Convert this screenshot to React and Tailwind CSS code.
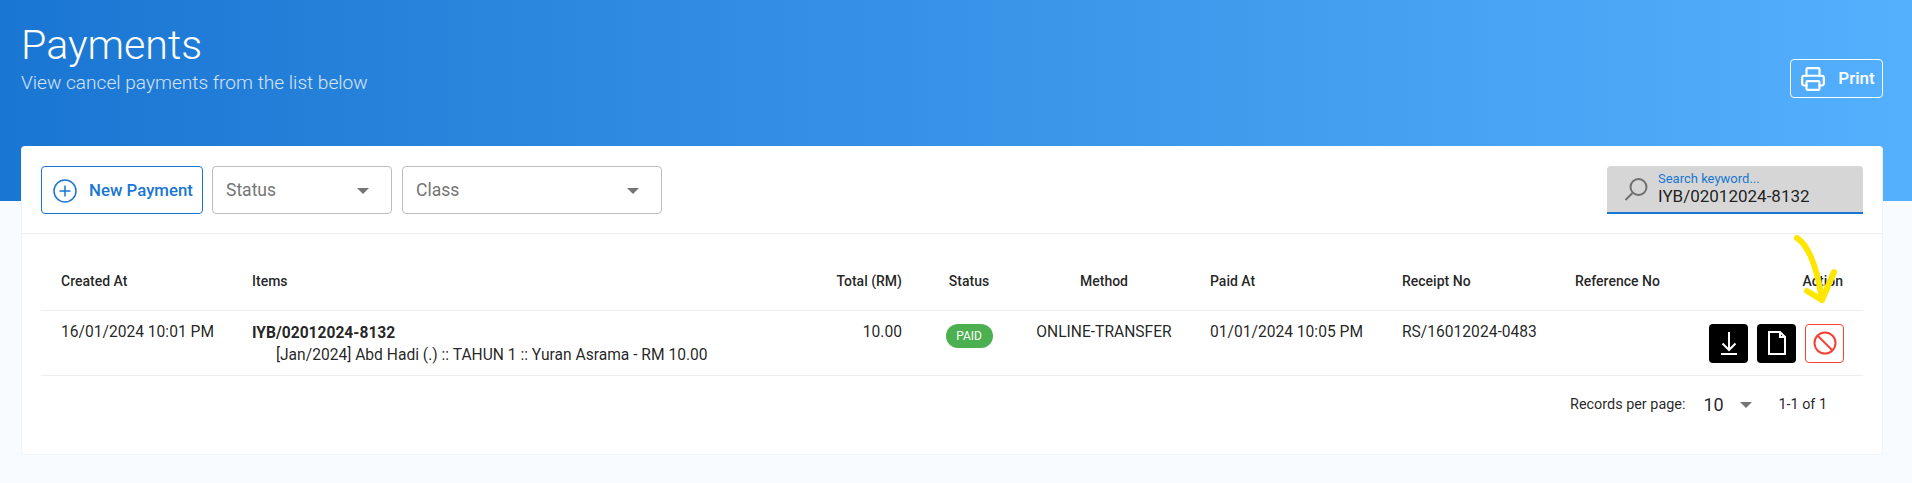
import React from 'react';
import { Printer } from 'lucide-react';

const roboto = "font-['Roboto',sans-serif]";

function Dropdown({ label, width }) {
  return (
    <div className={`${width} h-12 flex items-center justify-between pl-[13px] pr-[22px] pt-px border border-[#bdbdbd] rounded-[4px] text-[17.5px] text-[#757575]`}>
      <span>{label}</span>
      <span className="w-0 h-0 border-x-[6px] border-x-transparent border-t-[6px] border-t-[#757575]" />
    </div>
  );
}

function App() {
  return (
    <div className={`${roboto} relative h-[483px] overflow-hidden bg-[#f8fbff] text-[15.6px] text-[#000000de]`}>
      {/* Header */}
      <div className="h-[201px] bg-gradient-to-r from-[#1976d2] to-[#54b0fd] pl-[21px] pr-[29px] pt-[22px] flex justify-between items-start text-white">
        <div>
          <h1 className="text-[41.2px] leading-[46px] font-light">Payments</h1>
          <p className="mt-[3px] text-[19.1px] leading-[24px] font-light text-white/80">View cancel payments from the list below</p>
        </div>
        <button className="mt-[37px] w-[93px] h-[39px] pl-[2px] flex items-center justify-center gap-[12px] border border-white rounded-[4px] font-medium text-[17px]">
          <Printer size={26} strokeWidth={2} />
          Print
        </button>
      </div>

      {/* Card */}
      <div className="ml-[21px] mr-[29px] mt-[-55px] h-[309px] bg-white rounded-[4px] border border-[#f0f3f7] border-t-0">
        <div className="h-[88px] px-[19px] pt-5 flex justify-between border-b border-[#eeeeee]">
          <div className="flex gap-[9px]">
            <button className="w-[162px] h-12 pl-[2px] pt-px flex items-center justify-center gap-[12px] border border-[#1976d2] rounded-[4px] text-[#1976d2] font-medium text-[16.8px]">
              <svg width="24" height="24" viewBox="0 0 24 24" fill="none" stroke="currentColor" strokeWidth="1.5">
                <circle cx="12" cy="12" r="11" />
                <path d="M12 6.5v11M6.5 12h11" />
              </svg>
              New Payment
            </button>
            <Dropdown label="Status" width="w-[180px]" />
            <Dropdown label="Class" width="w-[260px] ml-px" />
          </div>
          <div className="w-[256px] h-12 bg-[#d6d6d6] border-b-2 border-[#1976d2] rounded-t-[4px] flex items-center pl-[17px]">
            <svg width="25" height="25" viewBox="0 0 25 25" fill="none" stroke="#6f6f6f" strokeWidth="2">
              <circle cx="14.5" cy="10" r="8" />
              <path d="M8.5 16L1.5 23" />
            </svg>
            <div className="ml-[9px]">
              <div className="text-[13px] leading-[14px] text-[#1976d2]">Search keyword...</div>
              <div className="text-[17px] leading-[20px] text-[#000000de]">IYB/02012024-8132</div>
            </div>
          </div>
        </div>

        <div className="px-[19px]">
          <table className="w-full table-fixed border-collapse">
            <colgroup>
              <col className="w-[195px]" />
              <col className="w-[582px]" />
              <col className="w-[100px]" />
              <col className="w-[102px]" />
              <col className="w-[168px]" />
              <col className="w-[198px]" />
              <col className="w-[173px]" />
              <col className="w-[131px]" />
              <col className="w-[173px]" />
            </colgroup>
            <thead>
              <tr className="h-[76px] border-b border-[#eeeeee] text-[14px]">
                <th className="pl-5 pt-5 text-left font-medium">Created At</th>
                <th className="px-4 pt-5 text-left font-medium">Items</th>
                <th className="pr-4 pt-5 text-right font-medium whitespace-nowrap">Total (RM)</th>
                <th className="pt-5 text-center font-medium">Status</th>
                <th className="pt-5 text-center font-medium">Method</th>
                <th className="pl-[22px] pt-5 text-left font-medium">Paid At</th>
                <th className="pl-4 pt-5 text-left font-medium">Receipt No</th>
                <th className="pl-4 pt-5 text-left font-medium whitespace-nowrap">Reference No</th>
                <th className="pr-5 pt-5 text-right font-medium">Action</th>
              </tr>
            </thead>
            <tbody>
              <tr className="h-[65px] border-b border-[#eeeeee] align-top">
                <td className="pl-5 pt-[10px] whitespace-nowrap">16/01/2024 10:01 PM</td>
                <td className="px-4 pt-[10px]">
                  <div className="font-bold leading-[24px]">IYB/02012024-8132</div>
                  <div className="pl-6 leading-[21px]">[Jan/2024] Abd Hadi (.) :: TAHUN 1 :: Yuran Asrama - RM 10.00</div>
                </td>
                <td className="pr-4 pt-[10px] text-right">10.00</td>
                <td className="pt-[13px] text-center">
                  <span className="inline-flex items-center justify-center h-6 w-[47px] rounded-full bg-[#4caf50] text-white text-[12px]">PAID</span>
                </td>
                <td className="pt-[10px] text-center whitespace-nowrap">ONLINE-TRANSFER</td>
                <td className="pl-[22px] pt-[10px] whitespace-nowrap">01/01/2024 10:05 PM</td>
                <td className="pl-4 pt-[10px] whitespace-nowrap">RS/16012024-0483</td>
                <td className="pl-4 pt-[10px]"></td>
                <td className="pr-[19px] pt-[13px]">
                  <div className="flex justify-end gap-[9px]">
                    <button className="w-[39px] h-[39px] bg-black rounded-[4px] flex items-center justify-center">
                      <svg width="18" height="23" viewBox="0 0 18 23" fill="none" stroke="white" strokeWidth="2">
                        <path d="M9 0v18M2.5 11.5L9 18l6.5-6.5M1 22h16" />
                      </svg>
                    </button>
                    <button className="w-[39px] h-[39px] bg-black rounded-[4px] flex items-center justify-center">
                      <svg width="20" height="24" viewBox="0 0 20 24" fill="none" stroke="white" strokeWidth="2">
                        <path d="M2 1h11l5 5v17H2zM13 1v5h5" />
                      </svg>
                    </button>
                    <button className="w-[39px] h-[39px] border border-[#f44336] rounded-[4px] flex items-center justify-center">
                      <svg width="24" height="24" viewBox="0 0 24 24" fill="none" stroke="#f44336" strokeWidth="2">
                        <circle cx="12" cy="12" r="10.5" />
                        <path d="M5 5l14 14" />
                      </svg>
                    </button>
                  </div>
                </td>
              </tr>
            </tbody>
          </table>
          <div className="h-[58px] flex items-center justify-end pr-[36px] text-[14.4px]">
            <span>Records per page:</span>
            <span className="ml-[18px] text-[18px] w-[49px] flex items-center justify-between">10
              <span className="w-0 h-0 border-x-[6px] border-x-transparent border-t-[6px] border-t-[#757575]" />
            </span>
            <span className="ml-[26px]">1-1 of 1</span>
          </div>
        </div>
      </div>

      {/* Yellow arrow annotation */}
      <svg className="absolute left-[1790px] top-[232px]" width="55" height="76" viewBox="0 0 55 76" fill="none" stroke="#ffe600" strokeWidth="6" strokeLinecap="round" strokeLinejoin="round">
        <path d="M7 6C16 12 26 28 32 68" />
        <path d="M17 59L32 68L44 40" />
      </svg>
    </div>
  );
}

export default App;
